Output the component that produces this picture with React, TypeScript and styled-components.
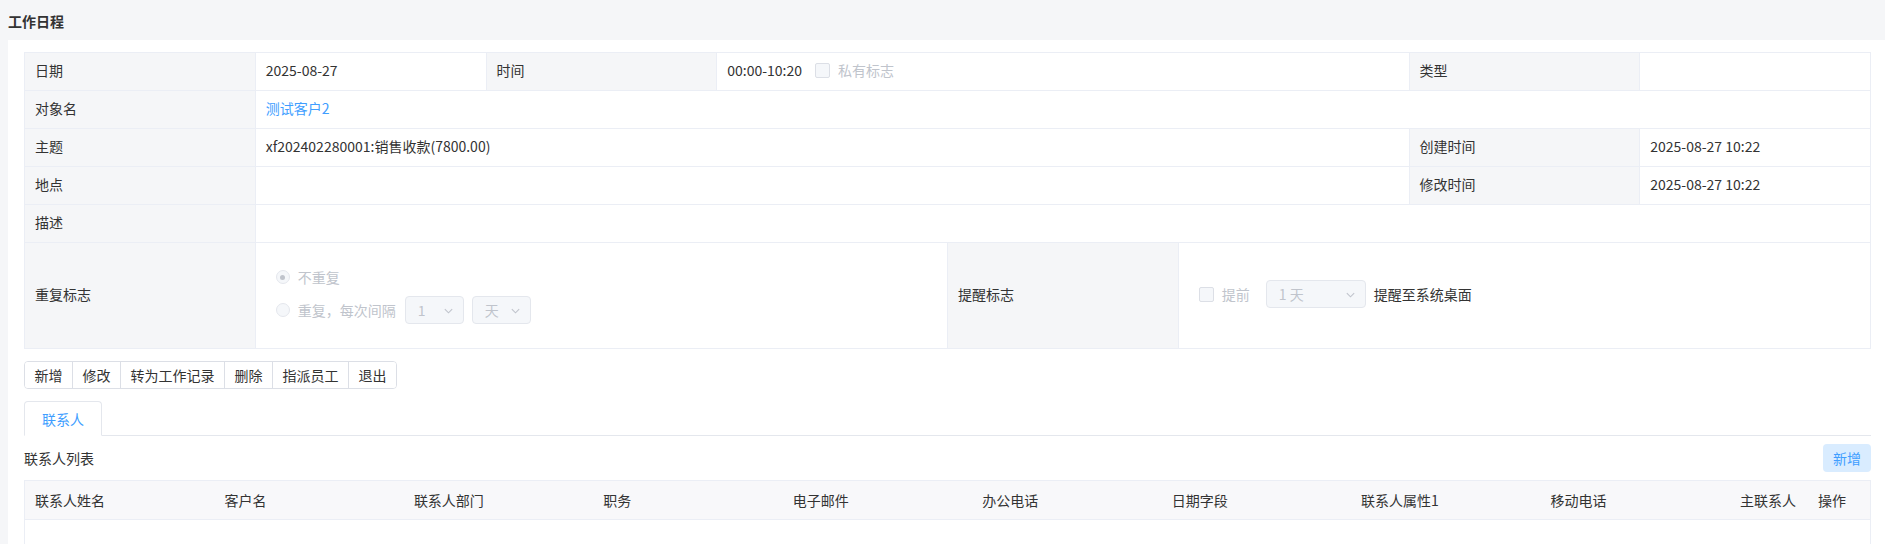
import React from 'react';
import styled, { createGlobalStyle } from 'styled-components';

const GlobalStyle = createGlobalStyle`
  html, body {
    margin: 0;
    padding: 0;
    background: #f5f6f8;
  }
  body {
    font-family: 'Noto Sans CJK SC', 'Noto Sans', sans-serif;
    font-size: 14px;
    color: #333;
  }
  * {
    box-sizing: border-box;
  }
`;

const Page = styled.div`
  padding-left: 8px;
  min-height: 544px;
`;

const Title = styled.div`
  height: 40px;
  display: flex;
  align-items: center;
  padding-top: 2px;
  font-size: 14px;
  font-weight: 700;
  color: #333;
`;

const Card = styled.div`
  background: #fff;
  padding: 12px 14px 0 16px;
  min-height: 504px;
`;

const InfoGrid = styled.div`
  display: grid;
  grid-template-columns: repeat(8, 1fr);
  border-top: 1px solid #ebeef5;
  border-left: 1px solid #ebeef5;
`;

const Cell = styled.div<{ $span?: number; $label?: boolean; $tall?: boolean }>`
  grid-column: span ${({ $span }) => $span || 1};
  height: ${({ $tall }) => ($tall ? '106px' : '38px')};
  padding: 0 10px 3px;
  display: flex;
  align-items: center;
  border-right: 1px solid #ebeef5;
  border-bottom: 1px solid #ebeef5;
  background: ${({ $label }) => ($label ? '#f5f6f8' : '#fff')};
  color: #333;
  white-space: nowrap;
`;

const Link = styled.span`
  color: #409eff;
`;

const Muted = styled.span`
  color: #c0c4cc;
`;

const Box = styled.span`
  width: 15px;
  height: 15px;
  border: 1px solid #dcdfe6;
  border-radius: 2px;
  background: #f5f7fa;
  display: inline-block;
  flex-shrink: 0;
`;

const Inline = styled.div<{ $gap?: number; $indent?: number }>`
  display: flex;
  align-items: center;
  gap: ${({ $gap }) => $gap ?? 8}px;
  padding-left: ${({ $indent }) => $indent ?? 0}px;
`;

const RadioStack = styled.div`
  display: flex;
  flex-direction: column;
  gap: 5px;
  padding-left: 10px;
  margin-top: -1px;
`;

const RadioRow = styled.div`
  height: 28px;
  display: flex;
  align-items: center;
`;

const Radio = styled.span<{ $checked?: boolean }>`
  width: 14px;
  height: 14px;
  border-radius: 50%;
  border: 1px solid #e4e7ed;
  background: #f5f7fa;
  display: inline-flex;
  align-items: center;
  justify-content: center;
  margin-right: 8px;
  flex-shrink: 0;

  &::after {
    content: '';
    width: 5px;
    height: 5px;
    border-radius: 50%;
    background: ${({ $checked }) => ($checked ? '#c0c4cc' : 'transparent')};
  }
`;

const Select = styled.div<{ $width: number }>`
  width: ${({ $width }) => $width}px;
  height: 28px;
  border: 1px solid #e4e7ed;
  border-radius: 4px;
  background: #f5f7fa;
  color: #c0c4cc;
  display: flex;
  align-items: center;
  justify-content: space-between;
  padding: 0 9px 0 12px;
  white-space: pre;

  svg {
    width: 11px;
    height: 11px;
  }
`;

const ButtonGroup = styled.div`
  display: inline-flex;
  margin-top: 12px;
  border: 1px solid #dcdfe6;
  border-radius: 4px;
  overflow: hidden;
`;

const GroupButton = styled.button`
  height: 26px;
  padding: 0 9.5px;
  border: none;
  border-right: 1px solid #dcdfe6;
  background: #fff;
  color: #333;
  font-family: inherit;
  font-size: 14px;
  cursor: pointer;

  &:last-child {
    border-right: none;
  }
`;

const TabBar = styled.div`
  margin-top: 12px;
  display: flex;
  border-bottom: 1px solid #e4e7ed;
`;

const Tab = styled.div<{ $active?: boolean }>`
  height: 35px;
  padding: 0 17px;
  display: flex;
  align-items: center;
  border: 1px solid #e4e7ed;
  border-bottom-color: ${({ $active }) => ($active ? '#fff' : '#e4e7ed')};
  border-radius: 4px 4px 0 0;
  margin-bottom: -1px;
  background: #fff;
  color: ${({ $active }) => ($active ? '#409eff' : '#333')};
`;

const ListHead = styled.div`
  display: flex;
  align-items: center;
  justify-content: space-between;
  margin-top: 8px;
`;

const LightButton = styled.button`
  height: 28px;
  width: 48px;
  border: none;
  border-radius: 4px;
  background: #d9ecff;
  color: #409eff;
  font-family: inherit;
  font-size: 14px;
`;

const Table = styled.div`
  margin-top: 8px;
  border: 1px solid #ebeef5;
  border-bottom: none;
`;

const HeadRow = styled.div`
  display: grid;
  grid-template-columns: repeat(9, 1fr) 78px 62px;
  height: 39px;
  background: #f8f8fa;
  border-bottom: 1px solid #ebeef5;
`;

const HeadCell = styled.div`
  display: flex;
  align-items: center;
  padding-left: 10px;
  color: #333;
  white-space: nowrap;
`;

const Body = styled.div`
  height: 40px;
`;

const Chevron = () => (
  <svg viewBox="0 0 12 12" fill="none" stroke="#c0c4cc" strokeWidth="1.2">
    <polyline points="2,4.5 6,8.5 10,4.5" />
  </svg>
);

const columns = [
  '联系人姓名',
  '客户名',
  '联系人部门',
  '职务',
  '电子邮件',
  '办公电话',
  '日期字段',
  '联系人属性1',
  '移动电话',
  '主联系人',
  '操作',
];

const actions = ['新增', '修改', '转为工作记录', '删除', '指派员工', '退出'];

export default function App() {
  return (
    <>
      <GlobalStyle />
      <Page>
        <Title>工作日程</Title>
        <Card>
          <InfoGrid>
            <Cell $label>日期</Cell>
            <Cell>2025-08-27</Cell>
            <Cell $label>时间</Cell>
            <Cell $span={3}>
              <Inline $gap={13}>
                <span>00:00-10:20</span>
                <Inline $gap={8}>
                  <Box />
                  <Muted>私有标志</Muted>
                </Inline>
              </Inline>
            </Cell>
            <Cell $label>类型</Cell>
            <Cell />

            <Cell $label>对象名</Cell>
            <Cell $span={7}>
              <Link>测试客户2</Link>
            </Cell>

            <Cell $label>主题</Cell>
            <Cell $span={5}>xf202402280001:销售收款(7800.00)</Cell>
            <Cell $label>创建时间</Cell>
            <Cell>2025-08-27 10:22</Cell>

            <Cell $label>地点</Cell>
            <Cell $span={5} />
            <Cell $label>修改时间</Cell>
            <Cell>2025-08-27 10:22</Cell>

            <Cell $label>描述</Cell>
            <Cell $span={7} />

            <Cell $label $tall>重复标志</Cell>
            <Cell $span={3} $tall>
              <RadioStack>
                <RadioRow>
                  <Radio $checked />
                  <Muted>不重复</Muted>
                </RadioRow>
                <RadioRow>
                  <Radio />
                  <Muted>重复，每次间隔</Muted>
                  <Inline $gap={8} $indent={9}>
                    <Select $width={59}>
                      1<Chevron />
                    </Select>
                    <Select $width={59}>
                      天<Chevron />
                    </Select>
                  </Inline>
                </RadioRow>
              </RadioStack>
            </Cell>
            <Cell $label $tall>提醒标志</Cell>
            <Cell $span={3} $tall>
              <Inline $gap={8} $indent={10}>
                <Box />
                <Muted>提前</Muted>
                <Inline $gap={8} $indent={8}>
                  <Select $width={100}>
                    {'1 天'}
                    <Chevron />
                  </Select>
                  <span>提醒至系统桌面</span>
                </Inline>
              </Inline>
            </Cell>
          </InfoGrid>

          <ButtonGroup>
            {actions.map((a) => (
              <GroupButton key={a}>{a}</GroupButton>
            ))}
          </ButtonGroup>

          <TabBar>
            <Tab $active>联系人</Tab>
          </TabBar>

          <ListHead>
            <span>联系人列表</span>
            <LightButton>新增</LightButton>
          </ListHead>

          <Table>
            <HeadRow>
              {columns.map((c) => (
                <HeadCell key={c}>{c}</HeadCell>
              ))}
            </HeadRow>
            <Body />
          </Table>
        </Card>
      </Page>
    </>
  );
}
